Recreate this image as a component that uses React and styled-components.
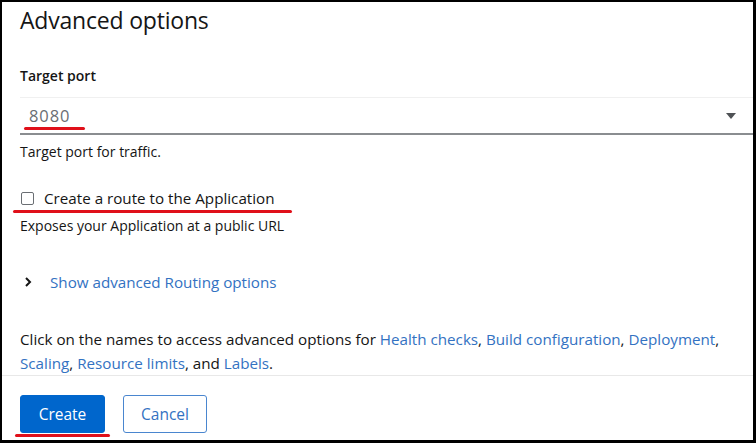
import React from "react";
import styled, { createGlobalStyle } from "styled-components";

const Global = createGlobalStyle`
  html, body { margin: 0; padding: 0; background: #fff; }
  body { font-family: "Open Sans", "Liberation Sans", sans-serif; color: #151515; }
`;

const Frame = styled.div`
  box-sizing: border-box;
  width: 756px;
  height: 443px;
  border-top: 2px solid #000;
  border-left: 2px solid #000;
  border-right: 3px solid #000;
  border-bottom: 3px solid #000;
  overflow: hidden;
  display: flex;
  flex-direction: column;
  background: #fff;
`;

const Body = styled.div`
  padding: 0 0 0 18px;
  display: flex;
  flex-direction: column;
`;

const Title = styled.h2`
  margin: 3px 0 0;
  font-size: 23px;
  font-weight: 400;
  line-height: 30px;
  letter-spacing: -0.2px;
`;

const Label = styled.div`
  margin-top: 31px;
  font-size: 14px;
  font-weight: 600;
  line-height: 20px;
`;

const Select = styled.div`
  margin-top: 11px;
  box-sizing: border-box;
  height: 38px;
  border-top: 1px solid #f0f0f0;
  border-bottom: 2px solid #8a8d90;
  display: flex;
  align-items: center;
  justify-content: space-between;
  padding: 0 17px 0 9px;
`;

const Value = styled.span`
  position: relative;
  font-size: 16.5px;
  letter-spacing: 0.9px;
  color: #6a6e73;
  line-height: 24px;
`;

const Marker = styled.span`
  position: absolute;
  left: ${(p) => p.$left}px;
  right: ${(p) => p.$right}px;
  bottom: ${(p) => p.$bottom}px;
  height: 3px;
  border-radius: 2px;
  background: #e0101a;
`;

const Caret = styled.svg`
  width: 10px;
  height: 6px;
  fill: #4f5255;
`;

const Help = styled.div`
  margin-top: ${(p) => p.$mt}px;
  font-size: 14px;
  line-height: 20px;
  color: #151515;
`;

const CheckRow = styled.label`
  position: relative;
  margin-top: 24px;
  display: flex;
  align-items: center;
  gap: 10px;
  font-size: 15.2px;
  line-height: 24px;
  width: fit-content;
`;

const Box = styled.span`
  box-sizing: border-box;
  width: 13px;
  height: 13px;
  border: 1px solid #6a6e73;
  border-radius: 2px;
  margin-left: 1px;
`;

const Toggle = styled.div`
  margin-top: 34px;
  display: flex;
  align-items: center;
  gap: 18px;
  padding-left: 4px;
  font-size: 15.2px;
  line-height: 24px;
`;

const Chevron = styled.svg`
  width: 8px;
  height: 10px;
`;

const Link = styled.a`
  color: #3372c2;
  text-decoration: none;
`;

const Para = styled.p`
  margin: 33px 0 0;
  font-size: 15.2px;
  line-height: 24px;
  padding-right: 20px;
`;

const Footer = styled.div`
  border-top: 1px solid #e8e8e8;
  padding: 19px 0 0 18px;
  display: flex;
  gap: 18px;
`;

const Btn = styled.button`
  position: relative;
  box-sizing: border-box;
  height: 38px;
  width: ${(p) => p.$w}px;
  font-family: inherit;
  font-size: 15.5px;
  border-radius: 3px;
  border: 1px solid ${(p) => (p.$primary ? "#0066cc" : "#4a86cf")};
  background: ${(p) => (p.$primary ? "#0066cc" : "#fff")};
  color: ${(p) => (p.$primary ? "#fff" : "#3372c2")};
  padding: 0;
`;

export default function App() {
  return (
    <>
      <Global />
      <Frame>
        <Body>
          <Title>Advanced options</Title>
          <Label>Target port</Label>
          <Select>
            <Value>
              8080
              <Marker $left={-5} $right={-15} $bottom={-2} />
            </Value>
            <Caret viewBox="0 0 10 6">
              <path d="M0 0h10L5 6z" />
            </Caret>
          </Select>
          <Help $mt={7}>Target port for traffic.</Help>
          <CheckRow>
            <Box />
            Create a route to the Application
            <Marker $left={-7} $right={-17} $bottom={-3} />
          </CheckRow>
          <Help $mt={6}>Exposes your Application at a public URL</Help>
          <Toggle>
            <Chevron viewBox="0 0 8 10">
              <path d="M2 1l4 4-4 4" stroke="#151515" strokeWidth="2" fill="none" />
            </Chevron>
            <Link>Show advanced Routing options</Link>
          </Toggle>
          <Para>
            Click on the names to access advanced options for <Link>Health checks</Link>,{" "}
            <Link>Build configuration</Link>, <Link>Deployment</Link>,{" "}
            <Link>Scaling</Link>, <Link>Resource limits</Link>, and <Link>Labels</Link>.
          </Para>
        </Body>
        <Footer>
          <Btn $primary $w={85}>
            Create
            <Marker $left={-6} $right={-6} $bottom={-5} />
          </Btn>
          <Btn $w={84}>Cancel</Btn>
        </Footer>
      </Frame>
    </>
  );
}
